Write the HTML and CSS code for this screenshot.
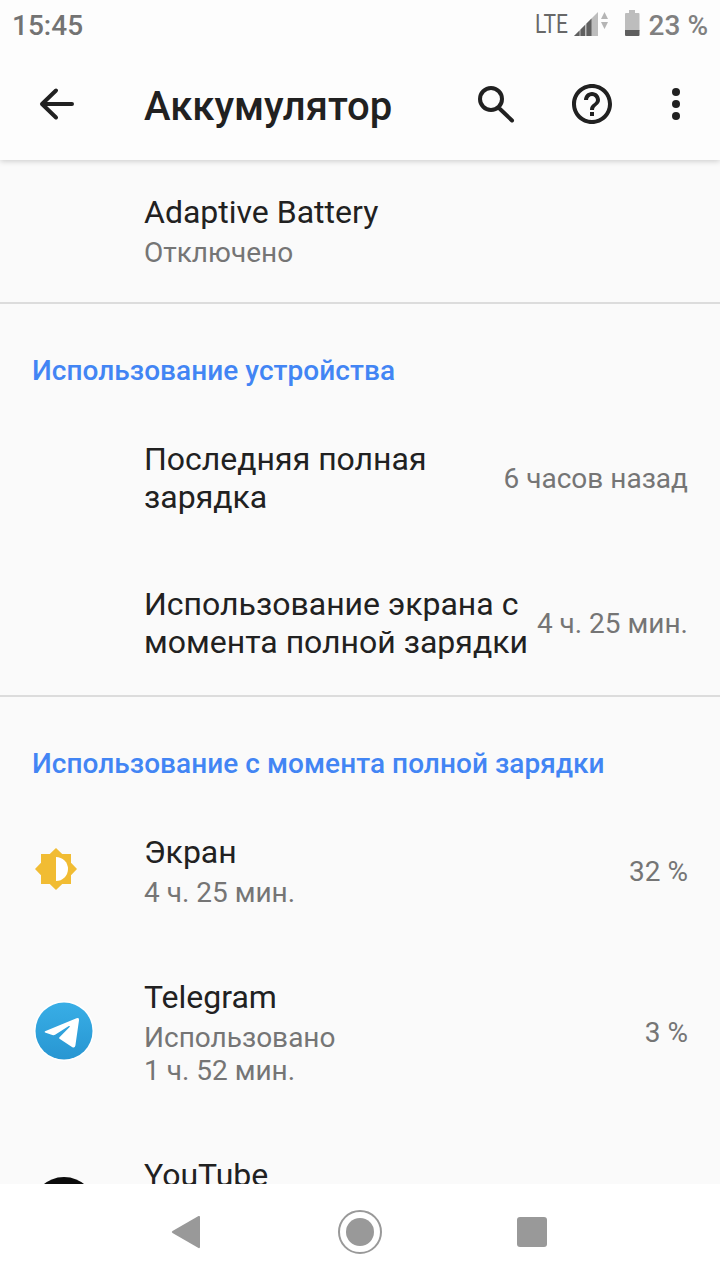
FILE: index.html
```html
<!DOCTYPE html>
<html lang="ru">
  <head>
    <meta charset="utf-8">
    <title>Аккумулятор</title>
    <link rel="stylesheet" href="styles.css">
  </head>
  <body>
    <div class="statusbar">
      <span class="clock">15:45</span>
      <span class="lte">LTE</span>
      <svg class="signal" width="36" height="26" viewBox="0 0 36 26">
        <path fill="#bdbdbd" d="M0 24L24 0v24z"/>
        <path fill="#5f5f5f" d="M0 24l5.500-5.500V24zM6.500 24v-6.500l4.500-4.500v11zM12.500 24V11.500L17.500 6.500V24z"/>
        <path fill="#b5b5b5" d="M27 7l3.500-7L34 7zM27 10h7l-3.500 7z"/>
      </svg>
      <svg class="cell" width="15" height="27" viewBox="0 0 15 27">
        <path fill="#bdbdbd" d="M4 0h6v3h3.500q1 0 1 1v17H0V4q0-1 1-1h3z"/>
        <path fill="#5f5f5f" d="M0 20h14.500v5q0 1-1 1H1q-1 0-1-1z"/>
      </svg>
      <span class="level">23 %</span>
    </div>

    <header class="appbar">
      <svg class="back" width="48" height="48" viewBox="0 0 48 48">
        <path d="M40 24H10.500M24 10.500L10 24l14 13.500"/>
      </svg>
      <h1>Аккумулятор</h1>
      <svg class="search" width="48" height="48" viewBox="0 0 48 48">
        <circle cx="19" cy="19" r="11"/>
        <path d="M28 29l12 11.500"/>
      </svg>
      <svg class="help" width="48" height="48" viewBox="0 0 24 24">
        <path d="M11 18h2v-2h-2v2zm1-16C6.480 2 2 6.480 2 12s4.480 10 10 10 10-4.480 10-10S17.520 2 12 2zm0 18c-4.410 0-8-3.590-8-8s3.590-8 8-8 8 3.590 8 8-3.590 8-8 8zm0-14c-2.210 0-4 1.790-4 4h2c0-1.100.9-2 2-2s2 .9 2 2c0 2-3 1.750-3 5h2c0-2.250 3-2.500 3-5 0-2.210-1.790-4-4-4z"/>
      </svg>
      <svg class="more" width="48" height="48" viewBox="0 0 48 48">
        <circle cx="24" cy="12" r="4"/>
        <circle cx="24" cy="24" r="4"/>
        <circle cx="24" cy="36" r="4"/>
      </svg>
    </header>

    <main class="content">
      <div class="row first">
        <div class="icon"></div>
        <div class="text">
          <div class="title">Adaptive Battery</div>
          <div class="summary">Отключено</div>
        </div>
      </div>

      <section>
        <h2>Использование устройства</h2>
        <div class="row">
          <div class="icon"></div>
          <div class="text">
            <div class="title">Последняя полная<br>зарядка</div>
          </div>
          <div class="value">6 часов назад</div>
        </div>
        <div class="row">
          <div class="icon"></div>
          <div class="text">
            <div class="title">Использование экрана с<br>момента полной зарядки</div>
          </div>
          <div class="value">4 ч. 25 мин.</div>
        </div>
      </section>

      <section>
        <h2>Использование с момента полной зарядки</h2>
        <div class="row">
          <div class="icon">
            <svg width="48" height="48" viewBox="0 0 48 48">
              <path fill="#f1bc33" d="M39 30.200L45 24l-6-6.200V9h-8.800L24 3l-6.200 6H9v8.800L3 24l6 6.200V39h8.800L24 45l6.200-6H39z"/>
              <path fill="#fff" d="M24 12a12 12 0 0 1 0 24z"/>
            </svg>
          </div>
          <div class="text">
            <div class="title">Экран</div>
            <div class="summary">4 ч. 25 мин.</div>
          </div>
          <div class="value">32 %</div>
        </div>
        <div class="row">
          <div class="icon">
            <svg width="64" height="64" viewBox="0 0 64 64">
              <defs>
                <linearGradient id="tg" x1="0" y1="0" x2="0" y2="1">
                  <stop offset="0" stop-color="#38aee6"/>
                  <stop offset="1" stop-color="#2896d2"/>
                </linearGradient>
              </defs>
              <circle cx="32" cy="32" r="30" fill="#fff"/>
              <circle cx="32" cy="32" r="28.500" fill="url(#tg)"/>
              <path fill="#fff" d="M13 32.200L44.500 19.300q2.900-1 2.500 1.900L43.400 46.500q-.6 3.200-3.400 1.500L27.500 39.800q-.9-.8 0-1.600L37.600 28q.8-1.500-.8-.9L23.500 35.600q-1.500.8-3.200.4L13 33.600q-.8-.6 0-1.400z"/>
            </svg>
          </div>
          <div class="text">
            <div class="title">Telegram</div>
            <div class="summary">Использовано<br>1 ч. 52 мин.</div>
          </div>
          <div class="value">3 %</div>
        </div>
        <div class="row">
          <div class="icon">
            <svg width="64" height="64" viewBox="0 0 64 64">
              <circle cx="32" cy="32" r="32" fill="#0b0b0b"/>
            </svg>
          </div>
          <div class="text">
            <div class="title">YouTube</div>
            <div class="summary"><br><br></div>
          </div>
        </div>
      </section>
    </main>

    <nav class="navbar">
      <svg width="48" height="48" viewBox="0 0 48 48">
        <path d="M34.500 8q1.500-.5 1.500 1v30q0 1.500-1.500 1L8.500 25q-1.500-1 0-2z"/>
      </svg>
      <svg width="48" height="48" viewBox="0 0 48 48">
        <circle class="ring" cx="24" cy="24" r="21"/>
        <circle cx="24" cy="24" r="14"/>
      </svg>
      <svg width="48" height="48" viewBox="0 0 48 48">
        <rect x="9" y="9" width="30" height="30" rx="3"/>
      </svg>
    </nav>
  </body>
</html>
```
FILE: styles.css
```css
* {
  box-sizing: border-box;
}

body {
  display: flex;
  flex-direction: column;
  width: 720px;
  height: 1280px;
  margin: 0;
  overflow: hidden;
  background: #fafafa;
  color: #212121;
  font-family: Roboto, "Liberation Sans", sans-serif;
}

svg {
  display: block;
  flex: none;
}

.statusbar {
  display: flex;
  align-items: center;
  flex: none;
  z-index: 2;
  height: 48px;
  padding: 2px 12px 0 12px;
  background: #fdfdfd;
  color: #808080;
  font-size: 28px;
  font-weight: 500;
}

.clock {
  flex: 1;
  color: #737373;
}

.lte {
  width: 38px;
  margin-top: -2px;
  font-size: 25px;
  font-weight: 400;
  color: #686868;
  transform: scaleX(.84);
  transform-origin: left;
}

.signal {
  margin-left: 1px;
}

.cell {
  margin: -3px 9px 0 15px;
}

.appbar {
  display: flex;
  align-items: center;
  flex: none;
  z-index: 1;
  height: 112px;
  padding: 0 20px 0 32px;
  background: #fdfdfd;
  box-shadow: 0 1px 6px rgba(0, 0, 0, .2);
  fill: #212121;
}

.appbar h1 {
  flex: 1;
  margin: 5px 0 0 64px;
  font-size: 40px;
  font-weight: 500;
}

.back,
.search {
  fill: none;
  stroke: #212121;
  stroke-width: 4;
  stroke-linecap: round;
  stroke-linejoin: round;
}

.help {
  margin-left: 48px;
}

.more {
  margin-left: 36px;
}

.content {
  flex: 1;
  min-height: 0;
  overflow: hidden;
}

.content section {
  border-top: 2px solid #dcdcdc;
}

.content h2 {
  margin: 0;
  padding: 50px 32px 18px;
  font-size: 28px;
  font-weight: 500;
  line-height: 33px;
  letter-spacing: .05px;
  color: #4285f4;
}

.row {
  display: flex;
  align-items: center;
  padding: 35px 32px 34px;
}

.row.first {
  padding-top: 33px;
  padding-bottom: 33px;
}

.icon {
  flex: none;
  width: 112px;
  padding-bottom: 4px;
}

.text {
  flex: 1;
  white-space: nowrap;
}

.title {
  font-size: 32px;
  line-height: 38px;
}

.summary {
  margin-top: 5px;
  font-size: 28px;
  line-height: 33px;
  color: #757575;
}

.value {
  font-size: 28px;
  line-height: 33px;
  color: #757575;
}

.navbar {
  display: flex;
  align-items: center;
  justify-content: center;
  gap: 124px;
  flex: none;
  height: 96px;
  background: #fff;
  fill: #999;
}

.ring {
  fill: none;
  stroke: #999;
  stroke-width: 2;
}
```
